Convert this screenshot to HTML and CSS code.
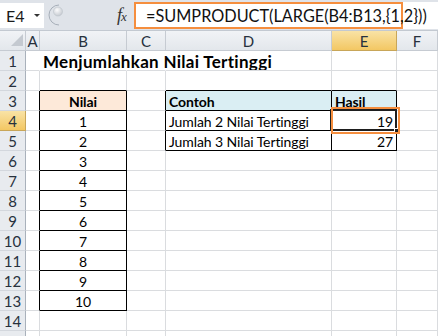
FILE: index.html
```html
<!DOCTYPE html>
<html lang="id">
<head>
    <meta charset="UTF-8">
    <title>Menjumlahkan Nilai Tertinggi</title>
    <link rel="stylesheet" href="styles.css">
</head>
<body>

    <!-- Formula bar -->
    <div class="fbar">
        <div class="namebox"><span>E4</span><span class="caret"></span></div>
        <div class="grip">
            <svg width="22" height="24" viewBox="0 0 22 24">
                <defs>
                    <radialGradient id="ball" cx="0.4" cy="0.35" r="0.7">
                        <stop offset="0" stop-color="#fbfbfc"/>
                        <stop offset="1" stop-color="#c3c8cf"/>
                    </radialGradient>
                </defs>
                <path d="M 11 2 A 10 10 0 0 0 11 22" fill="none" stroke="#a7afb9" stroke-width="1"/>
                <circle cx="10" cy="8.5" r="4.5" fill="url(#ball)" stroke="#bcc2ca" stroke-width="0.6"/>
            </svg>
            <span class="fx"><i>f</i><i class="sub">x</i></span>
        </div>
        <div class="formula">
            <div class="fbox">=SUMPRODUCT(LARGE(B4:B13,{1,2}))</div>
        </div>
    </div>

    <!-- Worksheet -->
    <div class="sheet">
        <div class="corner"><span class="tri"></span></div>
        <div class="ch">A</div>
        <div class="ch">B</div>
        <div class="ch">C</div>
        <div class="ch">D</div>
        <div class="ch ch-on">E</div>
        <div class="ch">F</div>

        <div class="rh">1</div>
        <div class="c nr"></div>
        <div class="c nr title">Menjumlahkan Nilai Tertinggi</div>
        <div class="c nr"></div>
        <div class="c"></div>
        <div class="c"></div>
        <div class="c"></div>

        <div class="rh">2</div>
        <div class="c"></div>
        <div class="c bt"></div>
        <div class="c"></div>
        <div class="c bt"></div>
        <div class="c bt"></div>
        <div class="c"></div>

        <div class="rh">3</div>
        <div class="c bl"></div>
        <div class="c bx peach ctr b">Nilai</div>
        <div class="c bl"></div>
        <div class="c bx blue b">Contoh</div>
        <div class="c bx blue b">Hasil</div>
        <div class="c"></div>

        <div class="rh rh-on">4</div>
        <div class="c bl"></div>
        <div class="c bx ctr">1</div>
        <div class="c bl"></div>
        <div class="c bx">Jumlah 2 Nilai Tertinggi</div>
        <div class="c bx rt active">19
            <span class="sel"><span class="handle"></span></span>
            <span class="mark"></span>
        </div>
        <div class="c"></div>

        <div class="rh">5</div>
        <div class="c bl"></div>
        <div class="c bx ctr">2</div>
        <div class="c bl"></div>
        <div class="c bx">Jumlah 3 Nilai Tertinggi</div>
        <div class="c bx rt">27</div>
        <div class="c"></div>

        <div class="rh">6</div>
        <div class="c bl"></div>
        <div class="c bx ctr">3</div>
        <div class="c"></div><div class="c"></div><div class="c"></div><div class="c"></div>

        <div class="rh">7</div>
        <div class="c bl"></div>
        <div class="c bx ctr">4</div>
        <div class="c"></div><div class="c"></div><div class="c"></div><div class="c"></div>

        <div class="rh">8</div>
        <div class="c bl"></div>
        <div class="c bx ctr">5</div>
        <div class="c"></div><div class="c"></div><div class="c"></div><div class="c"></div>

        <div class="rh">9</div>
        <div class="c bl"></div>
        <div class="c bx ctr">6</div>
        <div class="c"></div><div class="c"></div><div class="c"></div><div class="c"></div>

        <div class="rh">10</div>
        <div class="c bl"></div>
        <div class="c bx ctr">7</div>
        <div class="c"></div><div class="c"></div><div class="c"></div><div class="c"></div>

        <div class="rh">11</div>
        <div class="c bl"></div>
        <div class="c bx ctr">8</div>
        <div class="c"></div><div class="c"></div><div class="c"></div><div class="c"></div>

        <div class="rh">12</div>
        <div class="c bl"></div>
        <div class="c bx ctr">9</div>
        <div class="c"></div><div class="c"></div><div class="c"></div><div class="c"></div>

        <div class="rh">13</div>
        <div class="c bl"></div>
        <div class="c bx ctr">10</div>
        <div class="c"></div><div class="c"></div><div class="c"></div><div class="c"></div>

        <div class="rh">14</div>
        <div class="c"></div><div class="c"></div><div class="c"></div><div class="c"></div><div class="c"></div><div class="c"></div>

        <!-- row 15, only its top edge shows -->
        <div class="rh"></div>
        <div class="c"></div><div class="c"></div><div class="c"></div><div class="c"></div><div class="c"></div><div class="c"></div>
    </div>

</body>
</html>
```

FILE: styles.css
```css
/* Reset */
* {
    margin: 0;
    padding: 0;
    box-sizing: border-box;
}

body {
    font-family: 'Lato', 'Open Sans', sans-serif;
    background: #FFFFFF;
    width: 438px;
    height: 336px;
    overflow: hidden;
    color: #000000;
}

/* ---------- Formula bar ---------- */
.fbar {
    display: flex;
    height: 31px;
    background: #DFE3E9;
    border-bottom: 1px solid #C3C9D1;
}

.namebox {
    width: 44px;
    margin: 3px 0 2px 0;
    background: #FFFFFF;
    display: flex;
    align-items: center;
    padding-left: 6px;
    font-size: 16px;
    color: #1A1A1A;
}

.caret {
    margin-left: 9px;
    width: 0;
    height: 0;
    border-left: 3px solid transparent;
    border-right: 3px solid transparent;
    border-top: 3px solid #333333;
}

.grip {
    width: 90px;
    display: flex;
    align-items: center;
    padding-left: 4px;
}

.fx {
    margin-left: 47px;
    font-family: 'Liberation Serif', serif;
    font-size: 18px;
    color: #333333;
    letter-spacing: -1px;
    padding-top: 1px;
}

.fx .sub {
    font-size: 13px;
}

.formula {
    flex: 1;
    background: #FFFFFF;
    margin: 2px 0 1px 0;
}

.fbox {
    width: 269px;
    height: 27px;
    border: 2.5px solid #F58E3E;
    padding-left: 10px;
    line-height: 23px;
    font-size: 16.3px;
    color: #111111;
    white-space: nowrap;
}

/* ---------- Sheet grid ---------- */
.sheet {
    display: grid;
    grid-template-columns: 26px 14px 87px 39px 166px 65px 41px;
    grid-auto-rows: 20px;
}

.corner,
.ch,
.rh {
    background: linear-gradient(#F1F3F6, #E3E7EC);
    border-right: 1px solid #C6CBD2;
    border-bottom: 1px solid #C6CBD2;
    color: #27313D;
    font-size: 15px;
    text-align: center;
    line-height: 20px;
}

.rh {
    background: #E8EBEF;
    border-bottom-color: #D3D7DD;
    border-right-color: #A9B1BB;
    line-height: 21px;
}

.corner {
    position: relative;
}

.tri {
    position: absolute;
    right: 2px;
    bottom: 4px;
    width: 0;
    height: 0;
    border-left: 12px solid transparent;
    border-bottom: 12px solid #C4C9D0;
}

.ch-on,
.rh-on {
    background: linear-gradient(#F9E3A6, #F3C763);
    border-color: #C8A659;
}

.c {
    border-right: 1px solid #DADCDF;
    border-bottom: 1px solid #DADCDF;
    font-size: 14px;
    letter-spacing: -0.1px;
    line-height: 21px;
    padding: 0 3px;
    white-space: nowrap;
}

/* Title overflows into neighbouring cells */
.nr {
    border-right-color: transparent;
}

.title {
    font-size: 17px;
    font-weight: 700;
    overflow: visible;
    letter-spacing: 0.3px;
}

/* Thin black cell borders */
.bl {
    border-right-color: #000000;
}

.bt {
    border-bottom-color: #000000;
}

.bx {
    border-right-color: #000000;
    border-bottom-color: #000000;
}

.peach {
    background: #FDE9D9;
}

.blue {
    background: #DAEEF3;
}

.b {
    font-weight: 700;
}

.ctr {
    text-align: center;
}

.rt {
    text-align: right;
}

/* Active cell E4 */
.active {
    position: relative;
}

.sel {
    position: absolute;
    left: -2px;
    top: -2px;
    right: -1px;
    bottom: -1px;
    border: 2px solid #1E1E1E;
}

.handle {
    position: absolute;
    right: -4px;
    bottom: -4px;
    width: 5px;
    height: 5px;
    background: #1E1E1E;
    border: 1px solid #FFFFFF;
}

/* Orange highlight around E4 */
.mark {
    position: absolute;
    left: -1px;
    top: -4px;
    width: 69px;
    height: 27px;
    border: 2.5px solid #F58E3E;
}
```
